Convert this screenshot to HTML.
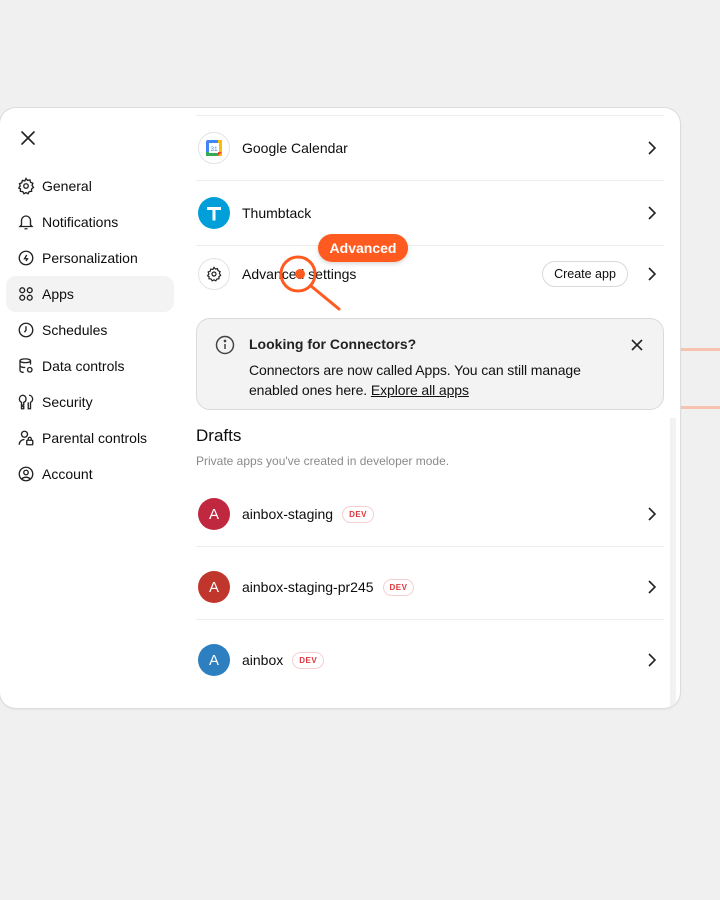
<!DOCTYPE html>
<html><head><meta charset="utf-8"><style>
*{box-sizing:border-box;margin:0;padding:0}
body{width:720px;height:900px;background:#f0f0f0;font-family:"Liberation Sans",sans-serif;color:#0d0d0d;position:relative;overflow:hidden}
.bgline{position:absolute;left:680px;width:40px;height:3px;background:#f6c3b0}
.panel{position:absolute;left:0;top:108px;width:680px;height:600px;background:#fff;border-radius:16px;box-shadow:0 0 0 1px #dcdcdc,0 1px 3px rgba(0,0,0,.08);overflow:hidden}
.ni{position:absolute;left:6px;width:168px;height:36px;border-radius:10px;display:flex;align-items:center;font-size:14px}
.ni svg{position:absolute;left:11px;top:9px}
.ni span{position:absolute;left:36px}
.ni.act{background:#f3f3f3}
.c{position:absolute;left:196px;width:468px}
.row{position:absolute;left:196px;width:468px;display:flex;align-items:center;font-size:14px}
.ic{width:32px;height:32px;border-radius:50%;border:1px solid #e3e3e3;display:flex;align-items:center;justify-content:center;margin-left:2px;margin-right:12px}
.av{width:32px;height:32px;border-radius:50%;color:#fff;display:flex;align-items:center;justify-content:center;font-size:15px;margin-left:2px;margin-right:12px}
.dev{font-size:8px;font-weight:bold;color:#e0353b;border:1px solid #f7cfd0;border-radius:9px;padding:3px 6px;margin-left:9px;letter-spacing:.5px}
.chev{position:absolute;right:8px;top:50%;margin-top:-7px}
.hr{position:absolute;left:196px;width:468px;height:1px;background:#ececec}
</style></head><body>
<div class="bgline" style="top:348px"></div>
<div class="bgline" style="top:406px"></div>
<div class="panel">
<svg style="position:absolute;left:21px;top:23px" width="14" height="14" viewBox="0 0 14 14"><path d="M1 1L13 13M13 1L1 13" stroke="#222" stroke-width="1.6" stroke-linecap="round"/></svg>
<div class="ni" style="top:60px"><svg width="18" height="18" viewBox="0 0 24 24" fill="none" stroke="#222" stroke-width="1.8"><circle cx="12" cy="12" r="3"/><path d="M12 2l2 2.5 3.2-.6.9 3.1 3 1.3-1 3 1.9 2.7-2.6 1.9.1 3.2-3.2.4-1.6 2.8-2.7-1.5-2.7 1.5-1.6-2.8-3.2-.4.1-3.2L2.4 14.7l1.9-2.7-1-3 3-1.3.9-3.1 3.2.6z"/></svg><span>General</span></div>
<div class="ni" style="top:96px"><svg width="18" height="18" viewBox="0 0 24 24" fill="none" stroke="#222" stroke-width="1.8"><path d="M6 16V10a6 6 0 0112 0v6l2 2H4z M10 21h4"/></svg><span>Notifications</span></div>
<div class="ni" style="top:132px"><svg width="18" height="18" viewBox="0 0 24 24" fill="none" stroke="#222" stroke-width="1.8"><circle cx="12" cy="12" r="9"/><path d="M13 8l-3 5h4l-2 3"/></svg><span>Personalization</span></div>
<div class="ni act" style="top:168px"><svg width="18" height="18" viewBox="0 0 24 24" fill="none" stroke="#222" stroke-width="1.8"><circle cx="7" cy="7" r="3.2"/><circle cx="17" cy="7" r="3.2"/><circle cx="7" cy="17" r="3.2"/><circle cx="17" cy="17" r="3.2"/></svg><span>Apps</span></div>
<div class="ni" style="top:204px"><svg width="18" height="18" viewBox="0 0 24 24" fill="none" stroke="#222" stroke-width="1.8"><circle cx="12" cy="12" r="9"/><path d="M12 7v5l-2 3"/></svg><span>Schedules</span></div>
<div class="ni" style="top:240px"><svg width="18" height="18" viewBox="0 0 24 24" fill="none" stroke="#222" stroke-width="1.8"><ellipse cx="11" cy="5" rx="7" ry="2.5"/><path d="M4 5v13c0 1.4 2.5 2.5 5 2.5M18 5v5M4 11.5c0 1.4 3 2.5 7 2.5"/><circle cx="17" cy="17" r="3"/></svg><span>Data controls</span></div>
<div class="ni" style="top:276px"><svg width="18" height="18" viewBox="0 0 24 24" fill="none" stroke="#222" stroke-width="1.8"><path d="M8 3a5 5 0 00-2 9.5V21h3v-3h-1v-2h1v-3.5A5 5 0 008 3zM16 3a5 5 0 012 9.5V21h-3v-8.5"/></svg><span>Security</span></div>
<div class="ni" style="top:312px"><svg width="18" height="18" viewBox="0 0 24 24" fill="none" stroke="#222" stroke-width="1.8"><circle cx="10" cy="7" r="4"/><path d="M3 21c0-4 3-7 7-7"/><rect x="13" y="15" width="8" height="6" rx="1"/><path d="M15 15v-2a2 2 0 014 0v2"/></svg><span>Parental controls</span></div>
<div class="ni" style="top:348px"><svg width="18" height="18" viewBox="0 0 24 24" fill="none" stroke="#222" stroke-width="1.8"><circle cx="12" cy="12" r="9"/><circle cx="12" cy="10" r="3"/><path d="M6.5 18.5c3-3 8-3 11 0"/></svg><span>Account</span></div>

<div class="hr" style="top:7px"></div>
<div class="row" style="top:24px;height:32px"><div class="ic"><svg width="18" height="18" viewBox="0 0 18 18"><rect x="1" y="1" width="16" height="16" rx="2" fill="#4285f4"/><rect x="1" y="13" width="16" height="4" fill="#34a853"/><rect x="13" y="1" width="4" height="16" fill="#fbbc04"/><rect x="4" y="4" width="10" height="10" fill="#fff"/><text x="9" y="12" font-size="6.5" text-anchor="middle" fill="#4285f4" font-family="Liberation Sans">31</text><path d="M13 17l4-4h-4z" fill="#ea4335"/></svg></div>Google Calendar<svg class="chev" width="8" height="14" viewBox="0 0 8 14"><path d="M1 1l6 6-6 6" stroke="#222" stroke-width="1.6" fill="none"/></svg></div>
<div class="hr" style="top:72px"></div>
<div class="row" style="top:89px;height:32px"><div class="av" style="background:#009fd9"><svg width="16" height="18" viewBox="0 0 16 18"><path d="M1 3h14v3H9.5v10.5h-3V6H1z" fill="#fff"/></svg></div>Thumbtack<svg class="chev" width="8" height="14" viewBox="0 0 8 14"><path d="M1 1l6 6-6 6" stroke="#222" stroke-width="1.6" fill="none"/></svg></div>
<div class="hr" style="top:137px"></div>
<div class="row" style="top:150px;height:32px"><div class="ic"><svg width="16" height="16" viewBox="0 0 24 24" fill="none" stroke="#222" stroke-width="1.8"><circle cx="12" cy="12" r="3"/><path d="M12 2l2 2.5 3.2-.6.9 3.1 3 1.3-1 3 1.9 2.7-2.6 1.9.1 3.2-3.2.4-1.6 2.8-2.7-1.5-2.7 1.5-1.6-2.8-3.2-.4.1-3.2L2.4 14.7l1.9-2.7-1-3 3-1.3.9-3.1 3.2.6z"/></svg></div>Advanced settings
<div style="position:absolute;left:346px;top:3px;width:86px;height:26px;border:1px solid #d9d9d9;border-radius:13px;font-size:12.5px;display:flex;align-items:center;justify-content:center">Create app</div>
<svg class="chev" width="8" height="14" viewBox="0 0 8 14"><path d="M1 1l6 6-6 6" stroke="#222" stroke-width="1.6" fill="none"/></svg></div>

<div class="c" style="top:210px;height:92px;background:#f3f3f3;border:1px solid #dadada;border-radius:14px">
<svg style="position:absolute;left:18px;top:16px" width="20" height="20" viewBox="0 0 20 20" fill="none" stroke="#444" stroke-width="1.5"><circle cx="10" cy="10" r="8.5"/><path d="M10 9v5"/><circle cx="10" cy="6" r=".6" fill="#444"/></svg>
<div style="position:absolute;left:52px;top:17px;font-size:14px;font-weight:bold;color:#222">Looking for Connectors?</div>
<div style="position:absolute;left:52px;top:41px;font-size:14px;line-height:20px;color:#111;letter-spacing:-.1px">Connectors are now called Apps. You can still manage<br>enabled ones here. <u>Explore all apps</u></div>
<svg style="position:absolute;left:434px;top:20px" width="12" height="12" viewBox="0 0 12 12"><path d="M1 1l10 10M11 1L1 11" stroke="#222" stroke-width="1.6"/></svg>
</div>
<div class="c" style="top:318px;font-size:17px">Drafts</div>
<div class="c" style="top:346px;font-size:12px;color:#8a8a8a">Private apps you've created in developer mode.</div>
<div class="row" style="top:390px;height:32px"><div class="av" style="background:#c0283f">A</div>ainbox-staging<span class="dev">DEV</span><svg class="chev" width="8" height="14" viewBox="0 0 8 14"><path d="M1 1l6 6-6 6" stroke="#222" stroke-width="1.6" fill="none"/></svg></div>
<div class="hr" style="top:438px"></div>
<div class="row" style="top:463px;height:32px"><div class="av" style="background:#c0352c">A</div>ainbox-staging-pr245<span class="dev">DEV</span><svg class="chev" width="8" height="14" viewBox="0 0 8 14"><path d="M1 1l6 6-6 6" stroke="#222" stroke-width="1.6" fill="none"/></svg></div>
<div class="hr" style="top:511px"></div>
<div class="row" style="top:536px;height:32px"><div class="av" style="background:#2e7fc0">A</div>ainbox<span class="dev">DEV</span><svg class="chev" width="8" height="14" viewBox="0 0 8 14"><path d="M1 1l6 6-6 6" stroke="#222" stroke-width="1.6" fill="none"/></svg></div>
<div style="position:absolute;left:670px;top:310px;width:6px;height:290px;background:#f2f2f2"></div>
</div>
<div style="position:absolute;left:318px;top:234px;width:90px;height:28px;border-radius:14px;background:#ff5a1f;color:#fff;font-size:14px;font-weight:bold;display:flex;align-items:center;justify-content:center;box-shadow:0 2px 4px rgba(0,0,0,.15)">Advanced</div>
<svg style="position:absolute;left:0;top:0" width="720" height="900"><circle cx="298" cy="274" r="17" fill="none" stroke="#ff5a1f" stroke-width="3"/><line x1="311" y1="286" x2="339" y2="309" stroke="#ff5a1f" stroke-width="3" stroke-linecap="round"/><circle cx="300" cy="274" r="5" fill="#ff5a1f"/></svg>
</body></html>
